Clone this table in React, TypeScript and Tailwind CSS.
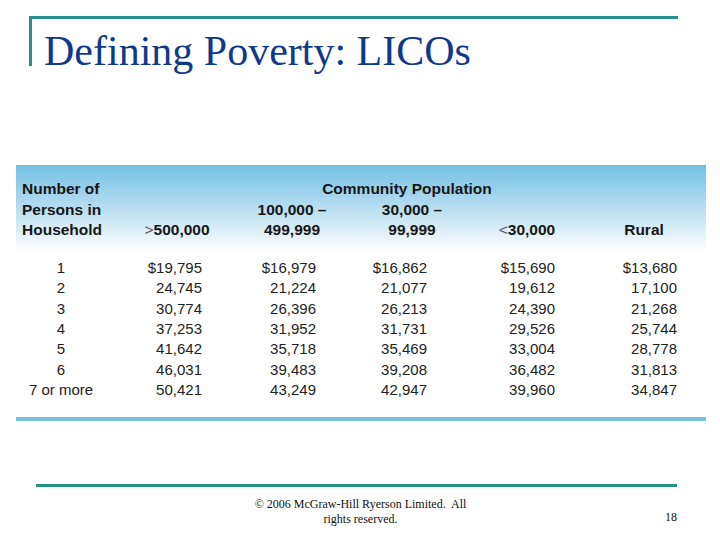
import React from 'react';

const rows = [
  ['1', '$19,795', '$16,979', '$16,862', '$15,690', '$13,680'],
  ['2', '24,745', '21,224', '21,077', '19,612', '17,100'],
  ['3', '30,774', '26,396', '26,213', '24,390', '21,268'],
  ['4', '37,253', '31,952', '31,731', '29,526', '25,744'],
  ['5', '41,642', '35,718', '35,469', '33,004', '28,778'],
  ['6', '46,031', '39,483', '39,208', '36,482', '31,813'],
  ['7 or more', '50,421', '43,249', '42,947', '39,960', '34,847'],
];

// right padding per data column so the figures line up like the scan
const pads = ['text-center', 'text-right pr-[46px]', 'text-right pr-[20px]', 'text-right pr-[61px]', 'text-right pr-[11px]', 'text-right pr-[29px]'];

const grid = 'grid grid-cols-[90px_142px_88px_152px_78px_140px]';

export default function App() {
  return (
    <div className="w-[720px] h-[540px] bg-white overflow-hidden flex flex-col">
      {/* title frame */}
      <div className="ml-[29px] mt-[16px] w-[649px] h-[50px] border-t-[3px] border-l-[3px] border-[#27908d] pl-[12px] pt-[11px]">
        <h1 className="text-[42px] leading-[42px] text-[#0f3a8a] whitespace-nowrap" style={{ fontFamily: '"Liberation Serif", "Times New Roman", serif' }}>
          Defining Poverty: LICOs
        </h1>
      </div>

      {/* table */}
      <div className="ml-[16px] mt-[99px] w-[690px] text-[15px] text-[#222]" style={{ fontFamily: '"Liberation Sans", Arial, sans-serif' }}>
        <div className={`${grid} content-start h-[87px] pt-[14px] text-[15.5px] leading-[20.5px] font-bold text-[#161616] bg-gradient-to-b from-[#72bfe3] via-[#b8def0] to-white`}>
          <div className="pl-[6px]">Number of</div>
          <div />
          <div className="col-span-3 text-center">Community Population</div>
          <div />

          <div className="pl-[6px]">Persons in</div>
          <div />
          <div className="text-center">100,000 –</div>
          <div className="text-center">30,000 –</div>
          <div />
          <div />

          <div className="pl-[6px]">Household</div>
          <div className="text-center"><span className="font-normal text-[#555]">&gt;</span>500,000</div>
          <div className="text-center">499,999</div>
          <div className="text-center">99,999</div>
          <div className="text-center"><span className="font-normal text-[#555]">&lt;</span>30,000</div>
          <div className="text-center pl-[16px]">Rural</div>
        </div>

        <div className="mt-[6px] leading-[20.33px]">
          {rows.map((r) => (
            <div key={r[0]} className={grid}>
              {r.map((v, i) => (
                <div key={i} className={pads[i]}>{v}</div>
              ))}
            </div>
          ))}
        </div>

        <div className="mt-[17px] h-[4px] bg-[#7ac2de]" />
      </div>

      {/* footer */}
      <div className="ml-[36px] mt-[63px] w-[641px] h-[3px] bg-[#27908d]" />
      <div className="relative ml-[36px] w-[641px] mt-[10px] pl-[8px] text-[12px] leading-[15px] text-[#111]" style={{ fontFamily: '"Liberation Serif", "Times New Roman", serif' }}>
        <p className="text-center">
          © 2006 McGraw-Hill Ryerson Limited.&nbsp; All
          <br />
          rights reserved.
        </p>
        <span className="absolute right-0 top-[13px]">18</span>
      </div>
    </div>
  );
}
